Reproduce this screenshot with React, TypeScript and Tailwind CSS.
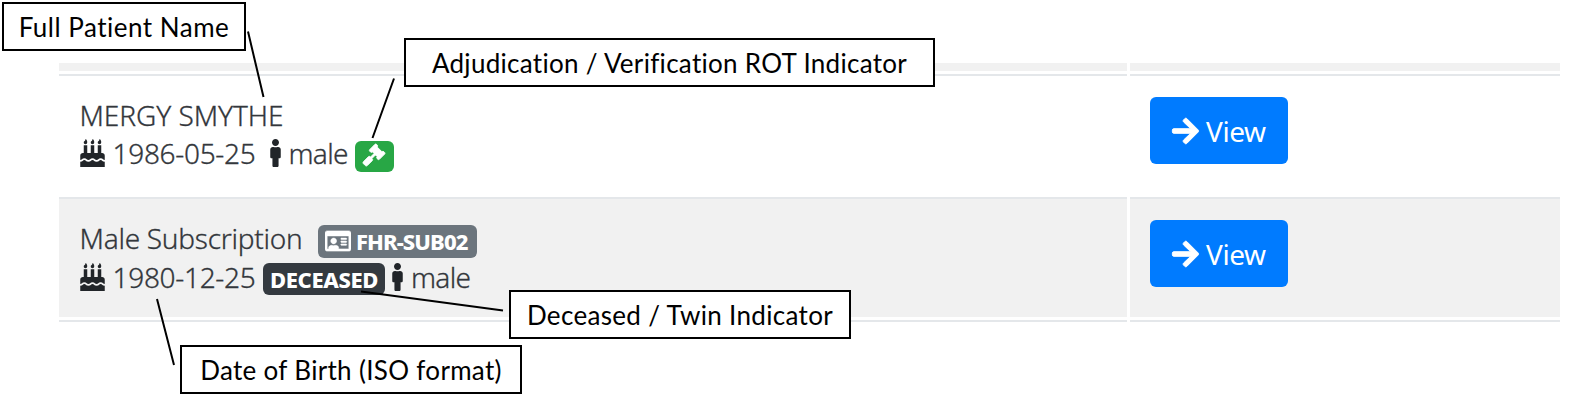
import React from "react";
import { FaArrowRight, FaBirthdayCake, FaGavel, FaMale, FaRegIdCard } from "react-icons/fa";

function ViewButton() {
  return (
    <button className="flex h-[67px] w-[138px] items-center rounded-[6px] bg-[#007bff] pl-[22px] text-white">
      <FaArrowRight strokeWidth={16} className="h-[30px] w-[27px] shrink-0 overflow-visible" />
      <span className="ml-[7px] text-[28px] leading-none tracking-[-0.4px]">View</span>
    </button>
  );
}

function Strip() {
  return (
    <div className="flex gap-[3px]">
      <div className="h-2 w-[1068px] bg-[#f1f1f1]" />
      <div className="h-2 w-[430px] bg-[#f1f1f1]" />
    </div>
  );
}

function Rule() {
  return (
    <div className="flex gap-[3px]">
      <div className="h-[2px] w-[1068px] bg-[#e4e7ea]" />
      <div className="h-[2px] w-[430px] bg-[#e4e7ea]" />
    </div>
  );
}

function Callout({ className, children }: { className: string; children: React.ReactNode }) {
  return (
    <div
      className={
        "absolute flex items-center justify-center whitespace-nowrap border-2 border-black bg-white font-['Lato'] text-[26px] leading-none text-black " +
        className
      }
    >
      {children}
    </div>
  );
}

export default function App() {
  return (
    <div className="relative h-[405px] w-[1580px] overflow-hidden bg-white font-['Noto_Sans',sans-serif] text-[28px] text-[#33373c]">
      <div className="flex flex-col pl-[59px] pt-[63px]">
        <Strip />
        <div className="h-[3px]" />
        <Rule />

        <div className="flex h-[121px] gap-[3px]">
          <div className="w-[1068px] pl-[20.5px] pt-[20px]">
            <div className="flex h-[38px] items-center whitespace-nowrap leading-[38px]">
              <span className="w-[204px] font-light tracking-[-0.05px] [-webkit-text-stroke:0.3px]">MERGY SMYTHE</span>
            </div>
            <div className="flex h-[38px] items-center whitespace-nowrap leading-[38px]">
              <FaBirthdayCake className="h-[28px] w-[25px] shrink-0 text-[#212529]" />
              <span className="ml-[8px] w-[156px] font-light tracking-[-0.3px] [-webkit-text-stroke:0.3px]">1986-05-25</span>
              <FaMale className="h-[28px] w-[13px] shrink-0 text-[#212529]" />
              <span className="ml-[7px] w-[66px] font-light tracking-[-0.7px] [-webkit-text-stroke:0.3px]">male</span>
              <span className="mt-[6px] flex h-[31px] w-[39px] items-center justify-center rounded-[6px] bg-[#28a745] text-white">
                <FaGavel strokeWidth={20} className="mb-[2px] h-[22px] w-[22px] overflow-visible" />
              </span>
            </div>
          </div>
          <div className="w-[430px] pl-[20px] pt-[21px]">
            <ViewButton />
          </div>
        </div>

        <Rule />
        <div className="flex h-[118px] gap-[3px]">
          <div className="w-[1068px] bg-[#f1f1f1] pl-[20.5px] pt-[20px]">
            <div className="flex h-[39px] items-center whitespace-nowrap leading-[39px]">
              <span className="w-[238.500px] font-light tracking-[-0.27px] [-webkit-text-stroke:0.3px]">Male Subscription</span>
              <span className="mt-[5px] flex h-[33px] w-[159px] items-center rounded-[6px] bg-[#6c757d] pl-[7px] text-white">
                <FaRegIdCard strokeWidth={12} className="h-[24px] w-[26px] shrink-0" />
                <span className="ml-[5px] text-[22px] font-extrabold leading-none tracking-[-0.9px]">FHR-SUB02</span>
              </span>
            </div>
            <div className="flex h-[38px] items-center whitespace-nowrap leading-[38px]">
              <FaBirthdayCake className="h-[28px] w-[25px] shrink-0 text-[#212529]" />
              <span className="ml-[8px] w-[150.500px] font-light tracking-[-0.3px] [-webkit-text-stroke:0.3px]">1980-12-25</span>
              <span className="mt-[3px] flex h-[32px] w-[122px] items-center justify-center rounded-[6px] bg-[#343a40] text-[22px] font-extrabold tracking-[-0.4px] text-white">
                DECEASED
              </span>
              <FaMale className="ml-[6px] h-[28px] w-[13px] shrink-0 text-[#212529]" />
              <span className="ml-[7px] w-[66px] font-light tracking-[-0.7px] [-webkit-text-stroke:0.3px]">male</span>
            </div>
          </div>
          <div className="w-[430px] bg-[#f1f1f1] pl-[20px] pt-[21px]">
            <ViewButton />
          </div>
        </div>
        <div className="h-[3px]" />
        <Rule />
      </div>

      <svg className="absolute left-0 top-0" width="1580" height="405" fill="none" stroke="#000" strokeWidth="2">
        <path d="M248 31.500L263.500 97M394 78.500L372.500 138M157 299L174 365M361 291.500L503 310.500" />
      </svg>

      <Callout className="left-[2px] top-[2px] h-[49px] w-[244px]">
        <span className="tracking-[0.5px]">Full Patient Name</span>
      </Callout>
      <Callout className="left-[404px] top-[38px] h-[49px] w-[531px]">
        <span className="tracking-[0.3px]">Adjudication / Verification ROT Indicator</span>
      </Callout>
      <Callout className="left-[509px] top-[290px] h-[49px] w-[342px]">
        <span className="tracking-[0.33px]">Deceased / Twin Indicator</span>
      </Callout>
      <Callout className="left-[180px] top-[345px] h-[49px] w-[342px]">
        <span className="tracking-[0.32px]">Date of Birth (ISO format)</span>
      </Callout>
    </div>
  );
}
